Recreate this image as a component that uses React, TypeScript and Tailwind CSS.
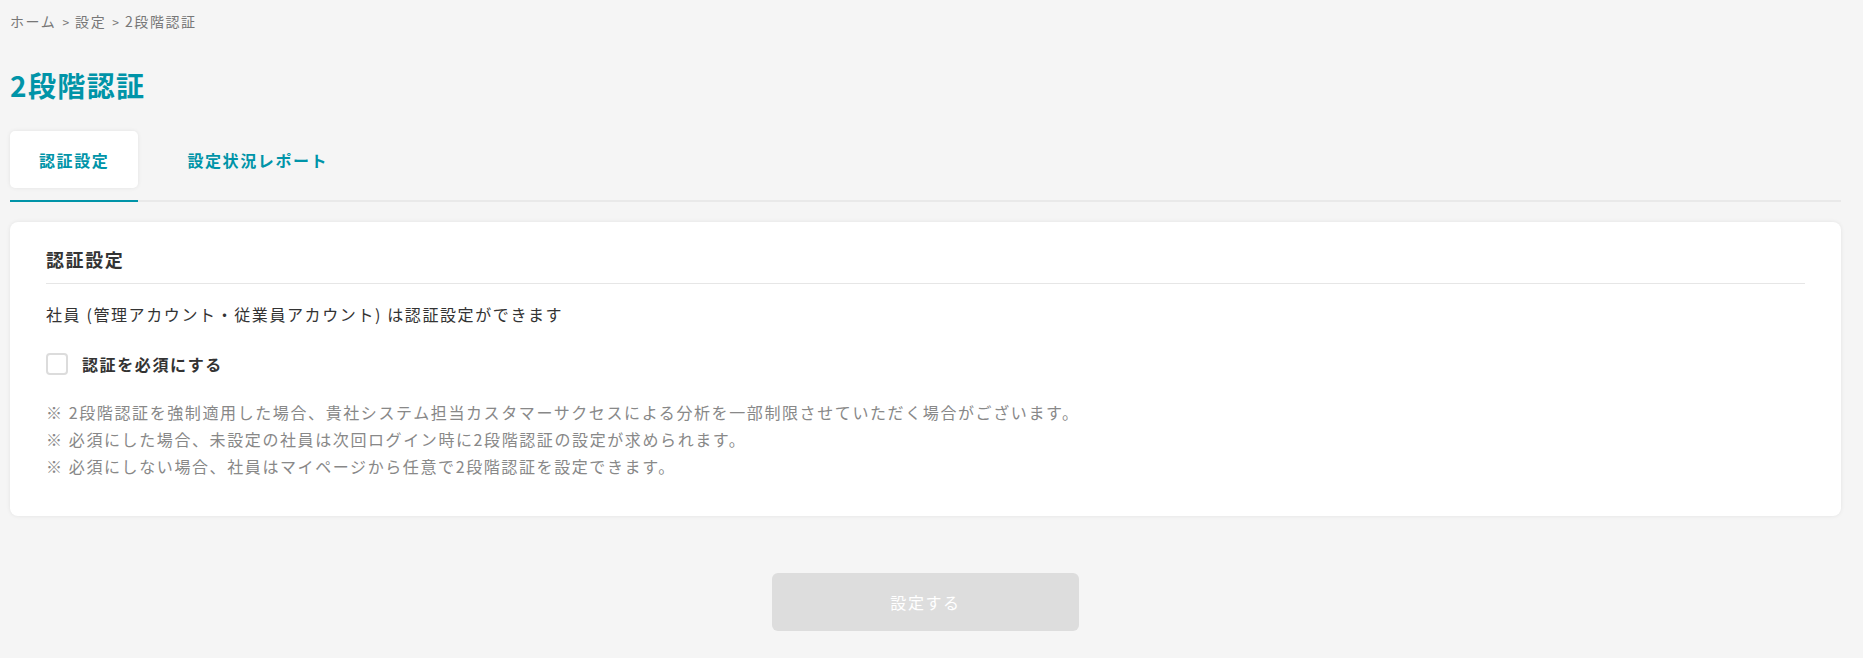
import { useState } from 'react';

const notes = [
  '※ 2段階認証を強制適用した場合、貴社システム担当カスタマーサクセスによる分析を一部制限させていただく場合がございます。',
  '※ 必須にした場合、未設定の社員は次回ログイン時に2段階認証の設定が求められます。',
  '※ 必須にしない場合、社員はマイページから任意で2段階認証を設定できます。',
];

const tabs = ['認証設定', '設定状況レポート'];

export default function App() {
  const [activeTab, setActiveTab] = useState(0);
  const [required, setRequired] = useState(false);

  return (
    <div
      className="min-h-[658px] bg-[#f5f5f5] pt-[11px] pb-[27px] pl-[10px] pr-[22px] tracking-[0.1em] text-[#333]"
      style={{ fontFamily: '"Noto Sans CJK JP", "Noto Sans", sans-serif' }}
    >
      {/* breadcrumb */}
      <nav className="flex items-center text-[14px] leading-[21px] text-[#777]">
        <span>ホーム</span>
        <span className="mx-[6px] text-[12px] tracking-normal">&gt;</span>
        <span>設定</span>
        <span className="mx-[6px] text-[12px] tracking-normal">&gt;</span>
        <span>2段階認証</span>
      </nav>

      <h1 className="mt-[33px] text-[28px] font-bold leading-[40px] tracking-[0.05em] text-[#0094a8]">
        2段階認証
      </h1>

      {/* tabs */}
      <div className="mt-[26px] flex gap-5 border-b-2 border-[#e9e9e9]">
        {tabs.map((tab, i) => (
          <button
            key={tab}
            onClick={() => setActiveTab(i)}
            className={`-mb-[2px] border-b-2 pb-3 ${
              activeTab === i ? 'border-[#0094a8]' : 'border-transparent'
            }`}
          >
            <div
              className={`flex h-[57px] items-center rounded-[5px] px-[29px] text-[16px] font-bold tracking-[0.1em] text-[#0094a8] ${
                activeTab === i ? 'bg-white shadow-[0_0_4px_rgba(0,0,0,0.08)]' : ''
              }`}
            >
              {tab}
            </div>
          </button>
        ))}
      </div>

      {/* card */}
      <section className="mt-5 rounded-lg bg-white px-9 pt-6 pb-[35px] shadow-[0_0_4px_rgba(0,0,0,0.08)]">
        <h2 className="border-b border-[#e6e6e6] pb-[10px] text-[18px] font-bold leading-[27px] text-[#333]">
          認証設定
        </h2>
        <p className="mt-[17px] text-[16px] leading-[27px]">
          社員 (管理アカウント・従業員アカウント) は認証設定ができます
        </p>
        <label className="mt-[25px] flex cursor-pointer items-center gap-[14px]">
          <input
            type="checkbox"
            checked={required}
            onChange={(e) => setRequired(e.target.checked)}
            className="h-[22px] w-[22px] cursor-pointer appearance-none rounded-[4px] border-2 border-[#dcdcdc] bg-white checked:border-[#0094a8] checked:bg-[#0094a8]"
          />
          <span className="text-[16px] font-bold leading-[22px]">認証を必須にする</span>
        </label>
        <div className="mt-6 text-[16px] leading-[27.2px] text-[#888]">
          {notes.map((n) => (
            <p key={n}>{n}</p>
          ))}
        </div>
      </section>

      <div className="mt-[57px] flex justify-center">
        <button
          disabled={!required}
          className="h-[58px] w-[307px] rounded-md bg-[#dddddd] text-[16px] tracking-[0.1em] text-white enabled:bg-[#0094a8]"
        >
          設定する
        </button>
      </div>
    </div>
  );
}
